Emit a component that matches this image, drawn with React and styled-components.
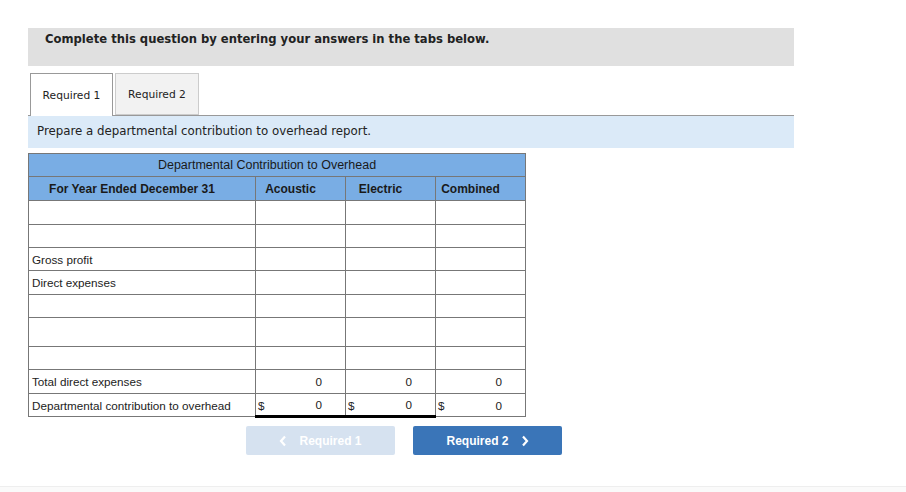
import styled, { createGlobalStyle } from "styled-components";

const GlobalStyle = createGlobalStyle`
  body {
    margin: 0;
    background: #fff;
    font-family: "DejaVu Sans", Verdana, sans-serif;
  }
`;

const rows = [
  { label: "", h: 24 },
  { label: "", h: 23 },
  { label: "Gross profit", h: 23, topRule: true },
  { label: "Direct expenses", h: 24 },
  { label: "", h: 23 },
  { label: "", h: 29 },
  { label: "", h: 23 },
  { label: "Total direct expenses", h: 24, topRule: true, values: ["0", "0", "0"] },
  { label: "Departmental contribution to overhead", h: 23, topRule: true, dollar: true, values: ["0", "0", "0"], bottomRule: true },
];

const App = () => {
  return (
    <Page>
      <GlobalStyle />
      <Banner>Complete this question by entering your answers in the tabs below.</Banner>
      <Tabs>
        <Tab active>Required 1</Tab>
        <Tab>Required 2</Tab>
      </Tabs>
      <Instruction>Prepare a departmental contribution to overhead report.</Instruction>
      <Report>
        <colgroup>
          <Col w={227} />
          <Col w={90} />
          <Col w={90} />
          <Col w={90} />
        </colgroup>
        <thead>
          <tr>
            <HeadCell colSpan={4} h={22}>Departmental Contribution to Overhead</HeadCell>
          </tr>
          <tr>
            <HeadCell h={23} $bold>For Year Ended December 31</HeadCell>
            <HeadCell h={23} $bold>Acoustic</HeadCell>
            <HeadCell h={23} $bold>Electric</HeadCell>
            <HeadCell h={23} $bold>Combined</HeadCell>
          </tr>
        </thead>
        <tbody>
          {rows.map((row, index) => (
            <tr key={index} style={{ height: row.h }}>
              <LabelCell>{row.label}</LabelCell>
              {[0, 1, 2].map((col) => (
                <ValueCell
                  key={col}
                  $top={row.topRule}
                  $bottom={row.bottomRule && col < 2}
                >
                  {row.dollar && <Dollar>$</Dollar>}
                  {row.values ? row.values[col] : ""}
                </ValueCell>
              ))}
            </tr>
          ))}
        </tbody>
      </Report>
      <Nav>
        <NavButton disabled>
          <Chevron viewBox="0 0 8 12"><path d="M6 1.5 L2 6 L6 10.5" /></Chevron>
          Required 1
        </NavButton>
        <NavButton>
          Required 2
          <Chevron viewBox="0 0 8 12"><path d="M2 1.5 L6 6 L2 10.5" /></Chevron>
        </NavButton>
      </Nav>
      <Footer />
    </Page>
  );
};

const Page = styled.div`
  padding-top: 28px;
  min-height: 492px;
  box-sizing: border-box;
  position: relative;
`;

const Banner = styled.div`
  margin-left: 28px;
  width: 766px;
  height: 38px;
  box-sizing: border-box;
  background: #e0e0e0;
  padding: 4px 0 0 17px;
  font-size: 11.6px;
  font-weight: bold;
  color: #222;
`;

const Tabs = styled.div`
  margin: 7px 0 0 28px;
  width: 766px;
  display: flex;
  gap: 2px;
  padding-left: 2px;
  box-sizing: border-box;
  border-bottom: 1px solid #999;
  height: 43px;
`;

const Tab = styled.div`
  width: ${(p) => (p.active ? "83px" : "84px")};
  height: ${(p) => (p.active ? "43px" : "42px")};
  box-sizing: border-box;
  display: flex;
  align-items: center;
  justify-content: center;
  font-size: 10.7px;
  color: #222;
  background: ${(p) => (p.active ? "#fff" : "#f2f2f2")};
  border: 1px solid ${(p) => (p.active ? "#999" : "#ccc")};
  border-bottom: ${(p) => (p.active ? "none" : "1px solid #ccc")};
  padding-top: 1px;
`;

const Instruction = styled.div`
  margin-left: 28px;
  width: 766px;
  height: 32px;
  box-sizing: border-box;
  background: #dbeaf8;
  padding: 8px 0 0 9px;
  font-size: 11.8px;
  color: #222;
`;

const Report = styled.table`
  margin: 5px 0 0 28px;
  width: 498px;
  table-layout: fixed;
  border-collapse: collapse;
  font-family: "Liberation Sans", Arial, sans-serif;
  font-size: 11.7px;
  color: #222;
  border: 1px solid #777;
`;

const Col = styled.col`
  width: ${(p) => p.w}px;
`;

const HeadCell = styled.th`
  background: #79ade4;
  border: 1px solid #777;
  font-weight: ${(p) => (p.$bold ? "bold" : "normal")};
  height: ${(p) => p.h || 24}px;
  padding: 0 20px 0 0;
  text-align: center;
  white-space: nowrap;
  color: #1a1a1a;
  font-size: ${(p) => (p.$bold ? "12px" : "12.5px")};
`;

const LabelCell = styled.td`
  border: 1px solid #777;
  padding: 0 3px;
  white-space: nowrap;
`;

const ValueCell = styled.td`
  border: 1px solid #777;
  border-top: ${(p) => (p.$top ? "1px solid #000" : "1px solid #777")};
  border-bottom: ${(p) => (p.$bottom ? "3px solid #000" : "1px solid #777")};
  text-align: right;
  padding: 0 23px 0 3px;
  position: relative;
`;

const Dollar = styled.span`
  position: absolute;
  left: 2px;
  top: 50%;
  transform: translateY(-50%);
`;

const Nav = styled.div`
  margin: 8px 0 0 246px;
  display: flex;
  gap: 18px;
`;

const NavButton = styled.div`
  width: 149px;
  height: 29px;
  border-radius: 2px;
  display: flex;
  align-items: center;
  justify-content: center;
  gap: 12px;
  font-family: "Liberation Sans", Arial, sans-serif;
  font-weight: bold;
  font-size: 12px;
  color: #fff;
  background: ${(p) => (p.disabled ? "#d6e2f0" : "#3a75b8")};
`;

const Chevron = styled.svg`
  width: 8px;
  height: 12px;
  fill: none;
  stroke: currentColor;
  stroke-width: 2.2;
`;

const Footer = styled.div`
  position: absolute;
  left: 0;
  right: 0;
  top: 486px;
  height: 6px;
  border-top: 1px solid #eee;
  background: #fafafa;
`;

export default App;
